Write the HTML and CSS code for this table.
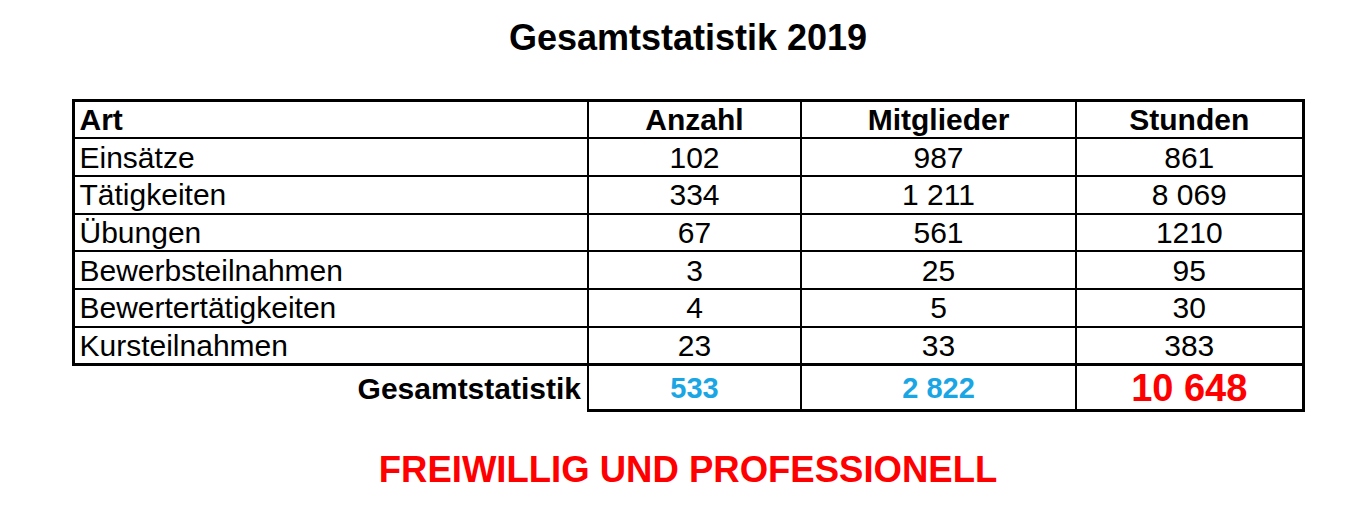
FILE: index.html
```html
<!DOCTYPE html>
<html lang="de">
<head>
<meta charset="utf-8">
<title>Gesamtstatistik 2019</title>
<link rel="stylesheet" href="styles.css">
</head>
<body>
<div class="page">
  <h1 class="title">Gesamtstatistik 2019</h1>
  <table class="stats">
    <colgroup>
      <col class="c-art"><col class="c-anz"><col class="c-mit"><col class="c-std">
    </colgroup>
    <thead>
      <tr class="row">
        <th class="art">Art</th>
        <th>Anzahl</th>
        <th>Mitglieder</th>
        <th>Stunden</th>
      </tr>
    </thead>
    <tbody>
      <tr class="row"><td class="art">Einsätze</td><td>102</td><td>987</td><td>861</td></tr>
      <tr class="row"><td class="art">Tätigkeiten</td><td>334</td><td>1 211</td><td>8 069</td></tr>
      <tr class="row"><td class="art">Übungen</td><td>67</td><td>561</td><td>1210</td></tr>
      <tr class="row"><td class="art">Bewerbsteilnahmen</td><td>3</td><td>25</td><td>95</td></tr>
      <tr class="row"><td class="art">Bewertertätigkeiten</td><td>4</td><td>5</td><td>30</td></tr>
      <tr class="row"><td class="art">Kursteilnahmen</td><td>23</td><td>33</td><td>383</td></tr>
    </tbody>
    <tfoot>
      <tr class="total">
        <th class="total-label">Gesamtstatistik</th>
        <td class="sum blue">533</td>
        <td class="sum blue">2 822</td>
        <td class="sum red">10 648</td>
      </tr>
    </tfoot>
  </table>
  <p class="slogan">FREIWILLIG UND PROFESSIONELL</p>
</div>
</body>
</html>
```

FILE: styles.css
```css
html, body {
  margin: 0;
  padding: 0;
  background: #ffffff;
}

body {
  font-family: "Liberation Sans", Arial, sans-serif;
  color: #000000;
}

.page {
  width: 1230px;
  margin-left: 73px;
  display: flex;
  flex-direction: column;
  align-items: center;
}

.title {
  margin: 17px 0 0;
  font-size: 36px;
  font-weight: bold;
  line-height: 41px;
  height: 41px;
}

.stats {
  margin-top: 41px;
  width: 1230px;
  border-collapse: collapse;
  table-layout: fixed;
  font-size: 30px;
}

.c-art { width: 515px; }
.c-anz { width: 213px; }
.c-mit { width: 275px; }
.c-std { width: 227px; }

.stats th,
.stats td {
  border: 2px solid #000000;
  padding: 1px 0 0;
  text-align: center;
  vertical-align: middle;
  line-height: 32px;
  white-space: nowrap;
}

.stats thead th {
  border-top-width: 3px;
  font-weight: bold;
}

.stats .row {
  height: 37.7px;
}

.stats .art {
  text-align: left;
  padding-left: 5px;
  border-left-width: 3px;
}

.stats th:last-child,
.stats td:last-child {
  border-right-width: 3px;
}

.stats tbody tr:last-child td {
  border-bottom-width: 3px;
}

.total {
  height: 46px;
}

.stats .total-label {
  border: none;
  border-right: 2px solid #000000;
  text-align: right;
  padding-right: 6px;
  font-weight: bold;
}

.stats .sum {
  font-weight: bold;
  font-size: 29px;
  border-bottom-width: 3px;
}

.blue {
  color: #1aa6e4;
}

.stats .red {
  color: #ff0000;
  font-size: 38px;
}

.slogan {
  margin: 37px 0 0;
  font-size: 36.5px;
  font-weight: bold;
  color: #ff0000;
  line-height: 41px;
}
```
